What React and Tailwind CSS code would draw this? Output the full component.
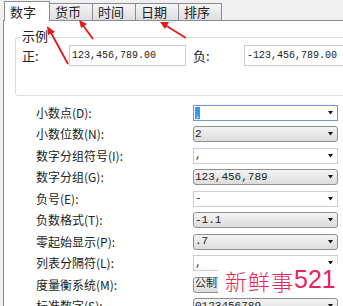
import React from 'react';

const rows = [
  { label: '小数点(D):', value: '.', kind: 'focus' },
  { label: '小数位数(N):', value: '2', kind: 'list' },
  { label: '数字分组符号(I):', value: ',', kind: 'edit' },
  { label: '数字分组(G):', value: '123,456,789', kind: 'list' },
  { label: '负号(E):', value: '-', kind: 'edit' },
  { label: '负数格式(T):', value: '-1.1', kind: 'list' },
  { label: '零起始显示(P):', value: '.7', kind: 'list' },
  { label: '列表分隔符(L):', value: ',', kind: 'edit' },
  { label: '度量衡系统(M):', value: '公制', kind: 'list' },
  { label: '标准数字(S):', value: '0123456789', kind: 'list' },
];

const tabs = ['数字', '货币', '时间', '日期', '排序'];

function Arrow() {
  return (
    <svg width="5" height="4" viewBox="0 0 5 4" className="shrink-0">
      <path d="M0 0 H5 L2.5 3.5 Z" fill="#111" />
    </svg>
  );
}

function Combo({ value, kind }) {
  const box =
    kind === 'list'
      ? 'border-[#8e8f8f] rounded-[3px] bg-gradient-to-b from-[#f4f4f4] to-[#dcdcdc]'
      : kind === 'focus'
      ? 'border-[#6d9ad4] bg-white'
      : 'border-[#c9ccd3] bg-white';
  return (
    <div className={`w-[145px] h-[16px] shrink-0 border flex items-center pl-[1px] pr-[4px] ${box}`}>
      {kind === 'focus' ? (
        <span className="bg-[#3399ff] text-white text-[11px] leading-[12px] px-[1px]">{value}</span>
      ) : (
        <span className="text-[11px] text-[#222] leading-none whitespace-nowrap font-['Liberation_Mono','Noto_Sans_CJK_SC',monospace]">{value}</span>
      )}
      <div className="flex-1" />
      <Arrow />
    </div>
  );
}

export default function App() {
  return (
    <div className="relative w-[343px] h-[306px] overflow-hidden bg-[#f0f0f0] font-['Noto_Sans_CJK_SC',sans-serif] text-[12px] text-[#222]">
      {/* Tabs */}
      <div className="flex items-end h-[20px] pl-[4px]">
        {tabs.map((t, i) =>
          i === 0 ? (
            <div key={t} className="w-[46px] h-[20px] bg-white border border-b-0 border-[#898c95] pl-[5px] pt-[1px] text-[13px] leading-[17px] relative z-10 -mb-px">
              {t}
            </div>
          ) : (
            <div key={t} className="w-[44px] h-[17px] -ml-px border border-b-0 border-[#898c95] bg-gradient-to-b from-[#f5f5f5] to-[#dedede] pl-[5px] text-[13px] leading-[16px]">
              {t}
            </div>
          )
        )}
      </div>

      {/* Panel */}
      <div className="ml-[3px] h-[300px] bg-white border-l border-t border-[#898c95] pt-[16px] pl-[11px]">
        <div className="relative w-[360px] h-[59px] border border-[#d5dfe5] rounded-[3px]">
          <span className="absolute left-[5px] -top-[11px] bg-white px-[1px] text-[13px] leading-[18px]">示例</span>
          <div className="flex items-center pt-[7px] pl-[6px]">
            <span className="w-[47px] text-[13px]">正:</span>
            <div className="w-[117px] h-[21px] border border-[#c9ccd3] flex items-center pl-[2px] text-[10px] font-['Liberation_Mono',monospace]">
              123,456,789.00
            </div>
            <span className="ml-[7px] w-[51px] text-[13px]">负:</span>
            <div className="w-[120px] h-[21px] border border-[#c9ccd3] flex items-center pl-[2px] text-[10px] font-['Liberation_Mono',monospace]">
              -123,456,789.00
            </div>
          </div>
        </div>

        <div className="pt-[6px]">
          {rows.map((r) => (
            <div key={r.label} className="flex items-center h-[21.5px]">
              <span className="w-[178px] shrink-0 pl-[21px] text-[12px] leading-none whitespace-nowrap">{r.label}</span>
              <Combo value={r.value} kind={r.kind} />
            </div>
          ))}
        </div>
      </div>

      {/* Watermark */}
      <div className="absolute left-[218px] top-[264px] w-[122px] h-[31px] bg-white flex items-center pl-[7px] whitespace-nowrap text-[#e8245a]">
        <span className="text-[22px] leading-none font-light tracking-[1px]">新鲜事</span>
        <span className="text-[25px] leading-none font-['Liberation_Sans',sans-serif]">521</span>
      </div>

      {/* Annotation arrows */}
      <svg className="absolute left-0 top-0 pointer-events-none" width="343" height="306">
        <g stroke="#e01818" strokeWidth="1.8" fill="#e01818">
          <line x1="68" y1="64" x2="50" y2="31" />
          <path d="M47 26 L55 32 L48 35 Z" stroke="none" />
          <line x1="93" y1="39" x2="82" y2="24" />
          <path d="M79 20 L87 24 L81 28 Z" stroke="none" />
          <line x1="186" y1="38" x2="165" y2="25" />
          <path d="M160 22 L169 22 L165 29 Z" stroke="none" />
        </g>
      </svg>
    </div>
  );
}
